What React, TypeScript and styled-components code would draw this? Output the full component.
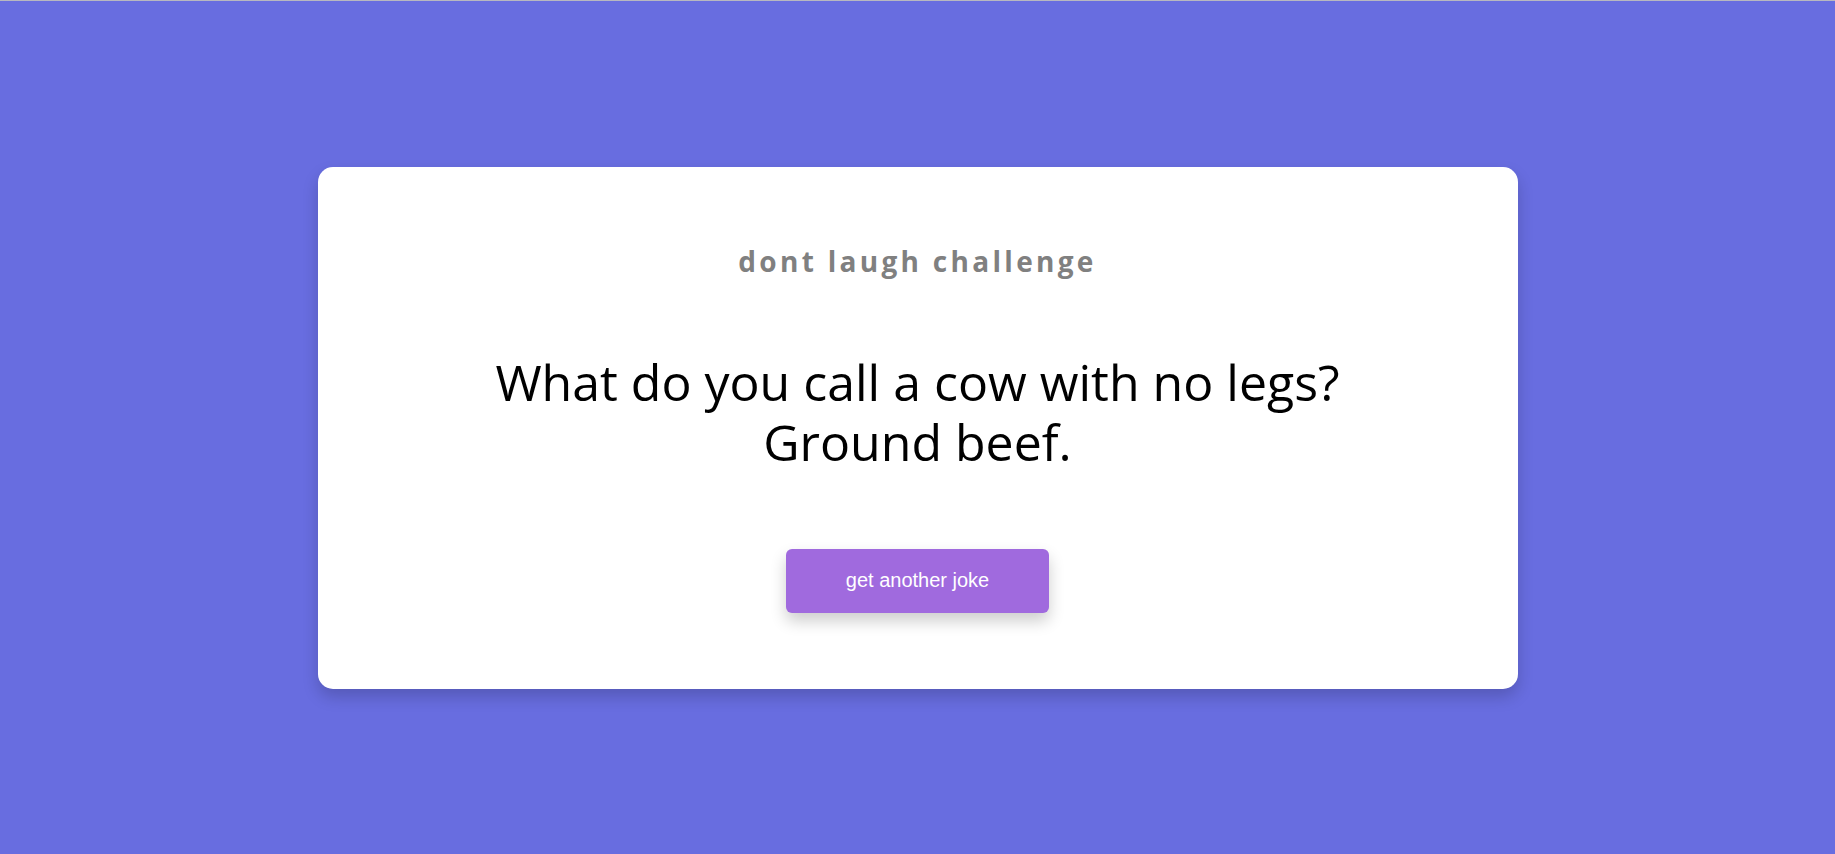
import React from "react";
import styled, { createGlobalStyle } from "styled-components";

const Global = createGlobalStyle`
  html, body { margin: 0; padding: 0; }
  body {
    background: #686de0;
    font-family: "Open Sans", "Noto Sans", sans-serif;
  }
`;

const Page = styled.main`
  min-height: 854px;
  display: flex;
  align-items: center;
  justify-content: center;
  box-sizing: border-box;
  border-top: 1px solid #b8b8c0;
`;

const Card = styled.section`
  width: 1200px;
  box-sizing: border-box;
  background: #ffffff;
  border-radius: 15px;
  box-shadow: 0 8px 16px rgba(0, 0, 0, 0.18);
  padding: 75px 40px 76px;
  display: flex;
  flex-direction: column;
  align-items: center;
  text-align: center;
`;

const Title = styled.h3`
  margin: 0;
  font-family: "Open Sans", sans-serif;
  font-size: 28px;
  line-height: 38px;
  font-weight: 700;
  letter-spacing: 3.3px;
  color: #808080;
`;

const Joke = styled.p`
  margin: 72px 0 0;
  font-family: "Open Sans", sans-serif;
  font-size: 50px;
  line-height: 60px;
  font-weight: 400;
  color: #000000;
`;

const Button = styled.button`
  margin-top: 77px;
  width: 263px;
  height: 64px;
  border: none;
  border-radius: 6px;
  background: #a06ade;
  color: #ffffff;
  font-family: "Liberation Sans", Arial, sans-serif;
  font-size: 20px;
  cursor: pointer;
  box-shadow: 0 8px 16px rgba(0, 0, 0, 0.2);
`;

export default function App() {
  return (
    <>
      <Global />
      <Page>
        <Card>
          <Title>dont laugh challenge</Title>
          <Joke>
            What do you call a cow with no legs?
            <br />
            Ground beef.
          </Joke>
          <Button>get another joke</Button>
        </Card>
      </Page>
    </>
  );
}
